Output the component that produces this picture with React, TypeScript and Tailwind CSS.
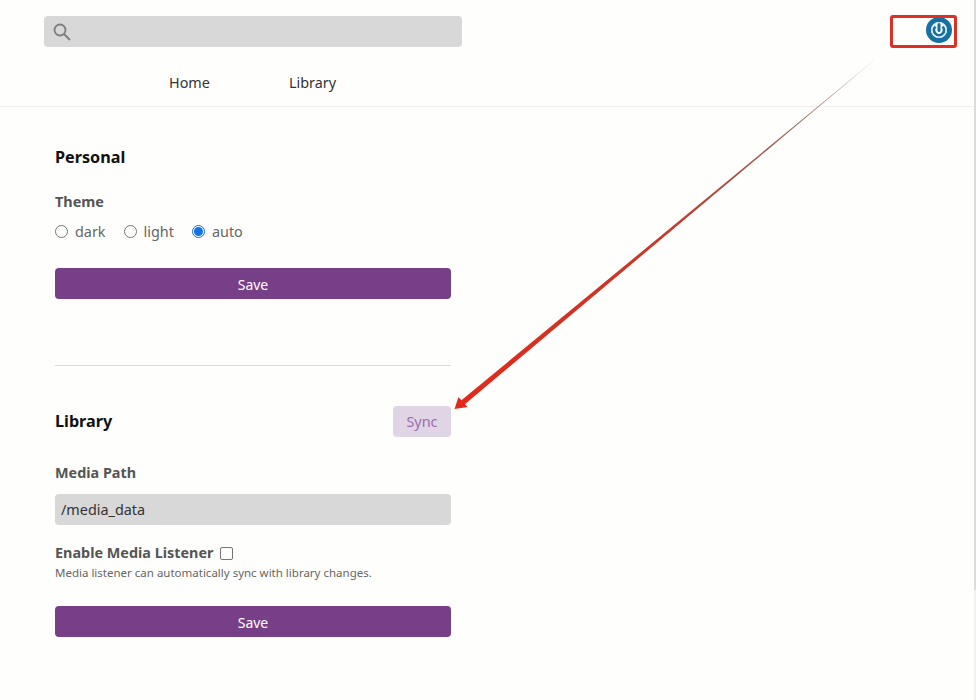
import React from "react";

const font = { fontFamily: '"Noto Sans", "Open Sans", sans-serif' };

const SaveButton = () => (
  <button className="h-[31px] w-full rounded-[4px] bg-[#763f88] pt-px text-[14px] text-white">Save</button>
);

const Radio = ({ label, checked }: { label: string; checked?: boolean }) => (
  <label className="flex items-center gap-[7px] text-[14.4px] text-[#666]">
    {checked ? (
      <span className="-mt-0.5 flex h-[13px] w-[13px] items-center justify-center rounded-full border border-[#0f6fe0]">
        <span className="h-[9px] w-[9px] rounded-full bg-[#1273e6]" />
      </span>
    ) : (
      <span className="-mt-0.5 h-[13px] w-[13px] rounded-full border border-[#767676]" />
    )}
    {label}
  </label>
);

export default function App() {
  return (
    <div className="relative h-[700px] w-[976px] overflow-hidden bg-[#fefefc]" style={font}>
      <header className="h-[107px] border-b border-[#efefed] pt-4">
        <div className="ml-11 flex h-[31px] w-[418px] items-center rounded-[4px] bg-[#d8d8d8] pl-2">
          <svg width="20" height="20" viewBox="0 0 20 20" fill="none" stroke="#7d7d7d" strokeWidth="1.8">
            <circle cx="8" cy="8" r="5.5" />
            <path d="M12 12l6 6" />
          </svg>
        </div>
        <nav className="mt-[25px] ml-[169px] flex gap-[79px] text-[14.4px] leading-[22px] text-[#333]">
          <a>Home</a>
          <a>Library</a>
        </nav>
      </header>

      <main className="ml-[55px] w-[396px]">
        <section>
          <h2 className="mt-10 text-[16.2px] leading-5 font-bold text-[#111]">Personal</h2>
          <h3 className="mt-[25px] text-[14.4px] leading-5 font-bold text-[#555]">Theme</h3>
          <div className="mt-2.5 flex h-5 gap-[18px]">
            <Radio label="dark" />
            <Radio label="light" />
            <Radio label="auto" checked />
          </div>
          <div className="mt-[26px]">
            <SaveButton />
          </div>
        </section>

        <hr className="mt-[66px] border-[#dcdcda]" />

        <section>
          <div className="mt-10 flex h-[31px] items-center justify-between">
            <h2 className="text-[16.2px] font-bold text-[#111]">Library</h2>
            <button className="h-[31px] w-[58px] rounded-[4px] bg-[#e0d5e4] text-[14.4px] text-[#9c6bb3]">Sync</button>
          </div>
          <h3 className="mt-[26px] text-[14.4px] leading-5 font-bold text-[#555]">Media Path</h3>
          <div className="mt-[11px] flex h-[31px] items-center rounded-[4px] bg-[#d8d8d8] pl-1.5 text-[14.4px] text-[#333]">
            /media_data
          </div>
          <div className="mt-[18px] flex h-5 items-center gap-[7px]">
            <span className="text-[14.4px] font-bold text-[#555]">Enable Media Listener</span>
            <span className="h-[13px] w-[13px] rounded-[2px] border border-[#767676]" />
          </div>
          <p className="mt-0.5 text-[11.5px] leading-[15px] text-[#666]">Media listener can automatically sync with library changes.</p>
          <div className="mt-[26px]">
            <SaveButton />
          </div>
        </section>
      </main>

      {/* power icon */}
      <svg className="absolute top-[16px] left-[925px]" width="28" height="28" viewBox="0 0 28 28" fill="none">
        <circle cx="14" cy="14" r="10.5" stroke="#17709f" strokeWidth="5" />
        <circle cx="14" cy="14" r="7.6" stroke="#bfe3f2" strokeWidth="1" />
        <path d="M10.4 10.6a5 5 0 1 0 7.2 0" stroke="#17709f" strokeWidth="2.8" />
        <path d="M14 8.5v6" stroke="#17709f" strokeWidth="3" strokeLinecap="round" />
      </svg>

      {/* red annotation */}
      <div className="absolute top-[15px] left-[890px] h-[33px] w-[67px] rounded-[3px] border-[3px] border-[#dd3025]" />
      <svg className="pointer-events-none absolute top-0 left-0" width="976" height="700" viewBox="0 0 976 700">
        <defs>
          <linearGradient id="shaft" gradientUnits="userSpaceOnUse" x1="878" y1="57" x2="460" y2="404">
            <stop offset="0" stopColor="#b5b0a4" />
            <stop offset="0.25" stopColor="#9a5a50" />
            <stop offset="0.5" stopColor="#c43a2c" />
            <stop offset="1" stopColor="#e3291b" />
          </linearGradient>
        </defs>
        <path d="M878 57L460.5 401L464 405Z" fill="url(#shaft)" />
        <path d="M454.5 409L458.5 397L467.5 407Z" fill="#e3291b" />
      </svg>

      <div className="absolute top-0 right-0 h-[590px] w-0.5 bg-[#dcdcda]" />
      <div className="absolute top-[590px] right-0 h-[110px] w-0.5 bg-[#f1f1ef]" />
    </div>
  );
}
